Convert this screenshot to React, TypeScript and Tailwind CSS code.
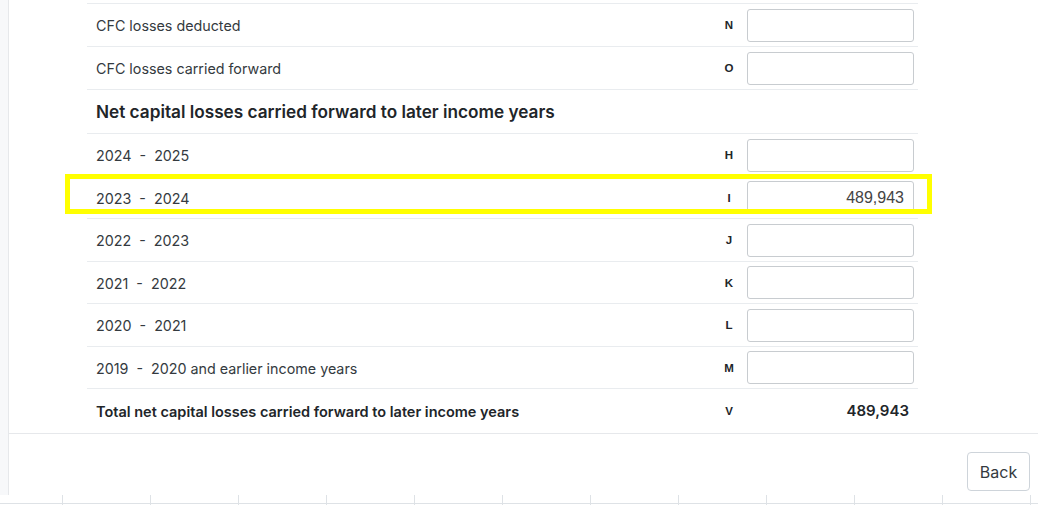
import React from "react";

const inter = { fontFamily: "Inter, 'Noto Sans', sans-serif" };
const arial = { fontFamily: "'Liberation Sans', Arial, sans-serif" };

type Row = { label: string; code: string; value?: string; h: string; highlight?: boolean };

function InputRow({ label, code, value, h, highlight }: Row) {
  return (
    <div className={`relative flex items-center border-b border-[#e9ecef] ${h}`}>
      <div className="flex-1 whitespace-nowrap pl-[9px] pt-[2px] text-[14.3px] text-[#343a40]" style={inter}>
        {label}
      </div>
      <div className="w-[30px] pt-[2px] text-center text-[11.5px] font-bold text-[#212529]" style={arial}>
        {code}
      </div>
      <div
        className="ml-[3px] mr-[4px] flex h-[33px] w-[167px] items-center justify-end rounded-[3px] border border-[#c8ccd0] bg-white pr-[9px] text-[16px] text-[#444]"
        style={arial}
      >
        {value}
      </div>
      {highlight && (
        <div className="pointer-events-none absolute left-[-22px] top-[-3px] h-[40px] w-[867px] border-[5px] border-[#ffff00]" />
      )}
    </div>
  );
}

export default function App() {
  const years: Row[] = [
    { label: "2024\u00a0\u00a0-\u00a0\u00a02025", code: "H", h: "h-[43px]" },
    { label: "2023\u00a0\u00a0-\u00a0\u00a02024", code: "I", h: "h-[42px]", value: "489,943", highlight: true },
    { label: "2022\u00a0\u00a0-\u00a0\u00a02023", code: "J", h: "h-[43px]" },
    { label: "2021\u00a0\u00a0-\u00a0\u00a02022", code: "K", h: "h-[42px]" },
    { label: "2020\u00a0\u00a0-\u00a0\u00a02021", code: "L", h: "h-[43px]" },
    { label: "2019\u00a0\u00a0-\u00a0\u00a02020 and earlier income years", code: "M", h: "h-[42px]" },
  ];
  const ticks = Array.from({ length: 12 });
  return (
    <div className="relative h-[505px] w-[1038px] overflow-hidden bg-white" style={inter}>
      <div className="flex h-[495px]">
        <div className="w-[9px] shrink-0 border-r border-[#e6e8eb] bg-[#f7f8fa]" />
        <div className="flex flex-1 flex-col">
          <div className="border-b border-[#e6e8eb]">
            <div className="ml-[78px] w-[831px]">
              <div className="h-[4px] border-b border-[#e9ecef]" />
              <InputRow label="CFC losses deducted" code="N" h="h-[43px]" />
              <InputRow label="CFC losses carried forward" code="O" h="h-[43px]" />
              <div className="flex h-[44px] items-center border-b border-[#e9ecef] pl-[9px] pt-[1px] text-[17.2px] font-semibold text-[#212529]">
                Net capital losses carried forward to later income years
              </div>
              {years.map((r) => (
                <InputRow key={r.code} {...r} />
              ))}
              <div className="flex h-[44px] items-center pt-[1px]">
                <div className="flex-1 whitespace-nowrap pl-[9px] text-[14.5px] font-semibold text-[#212529]">
                  Total net capital losses carried forward to later income years
                </div>
                <div className="w-[30px] text-center text-[11.5px] font-bold text-[#212529]" style={arial}>
                  V
                </div>
                <div className="ml-[3px] mr-[4px] w-[167px] pr-[5px] text-right text-[15px] font-semibold text-[#212529]">
                  489,943
                </div>
              </div>
            </div>
          </div>
          <div className="mt-[18px] flex justify-end pr-[8px]">
            <button className="h-[39px] w-[63px] rounded-[4px] border border-[#ced4da] bg-white text-[16px] text-[#343a40]">
              Back
            </button>
          </div>
        </div>
      </div>
      <div className="relative flex h-[10px]">
        <div className="w-[62px] shrink-0" />
        {ticks.map((_, i) => (
          <div key={i} className="w-[88px] shrink-0 border-l border-[#dee2e6]" />
        ))}
        <div className="absolute left-0 right-0 top-[8px] h-px bg-[#dee2e6]" />
      </div>
    </div>
  );
}
